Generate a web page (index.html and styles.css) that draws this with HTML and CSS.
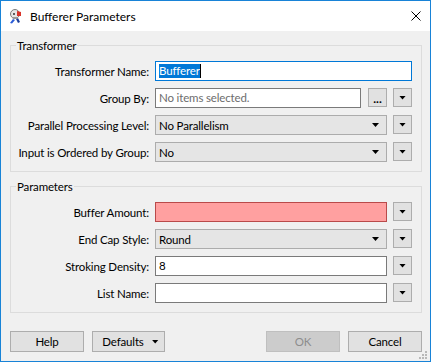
FILE: index.html
```html
<!DOCTYPE html>
<html lang="en">
<head>
    <meta charset="UTF-8">
    <title>Bufferer Parameters</title>
    <link rel="stylesheet" href="styles.css">
</head>
<body>
    <div class="window">
        <div class="titlebar">
            <svg class="app-icon" viewBox="0 0 16 16">
                <path d="M5 11 L2 15 L4 15.5 L7 12 Z" fill="#2a5bd7"/>
                <path d="M8 11 L10 15 L12 14 L10 10 Z" fill="#1c3f9c"/>
                <circle cx="7" cy="6" r="4.5" fill="#e6e6e6" stroke="#7a7a7a" stroke-width="1"/>
                <path d="M9 3 L13 4 L13 8 L9 8 Z" fill="#d9342b"/>
                <circle cx="6" cy="6" r="1" fill="#333"/>
                <path d="M4 9 L10 9 L9 11 L5 11 Z" fill="#9a9a9a"/>
            </svg>
            <span class="title">Bufferer Parameters</span>
            <svg class="close" viewBox="0 0 10 10">
                <path d="M0.5 0.5 L9.5 9.5 M9.5 0.5 L0.5 9.5" stroke="#000" stroke-width="1"/>
            </svg>
        </div>

        <div class="content">
            <fieldset class="group">
                <legend>Transformer</legend>
                <div class="form">
                    <label>Transformer Name:</label>
                    <div class="input focused span-all"><span class="selected">Bufferer</span><span class="caret"></span></div>

                    <label>Group By:</label>
                    <div class="field-pair">
                        <div class="input placeholder">No items selected.</div>
                        <button class="small-btn dots">...</button>
                    </div>
                    <button class="small-btn"><span class="tri"></span></button>

                    <label>Parallel Processing Level:</label>
                    <div class="combo"><span>No Parallelism</span><span class="tri"></span></div>
                    <button class="small-btn"><span class="tri"></span></button>

                    <label>Input is Ordered by Group:</label>
                    <div class="combo"><span>No</span><span class="tri"></span></div>
                    <button class="small-btn"><span class="tri"></span></button>
                </div>
            </fieldset>

            <fieldset class="group">
                <legend>Parameters</legend>
                <div class="form">
                    <label>Buffer Amount:</label>
                    <div class="input invalid"></div>
                    <button class="small-btn"><span class="tri"></span></button>

                    <label>End Cap Style:</label>
                    <div class="combo"><span>Round</span><span class="tri"></span></div>
                    <button class="small-btn"><span class="tri"></span></button>

                    <label>Stroking Density:</label>
                    <div class="input">8</div>
                    <button class="small-btn"><span class="tri"></span></button>

                    <label>List Name:</label>
                    <div class="input"></div>
                    <button class="small-btn"><span class="tri"></span></button>
                </div>
            </fieldset>

            <div class="footer">
                <button class="btn">Help</button>
                <button class="btn btn-menu">Defaults <span class="tri"></span></button>
                <div class="spacer"></div>
                <button class="btn" disabled>OK</button>
                <button class="btn">Cancel</button>
            </div>
        </div>

        <svg class="grip" viewBox="0 0 9 9">
            <rect x="6" y="0" width="2" height="2" fill="#b8b8b8"/>
            <rect x="3" y="3" width="2" height="2" fill="#b8b8b8"/>
            <rect x="6" y="3" width="2" height="2" fill="#b8b8b8"/>
            <rect x="0" y="6" width="2" height="2" fill="#b8b8b8"/>
            <rect x="3" y="6" width="2" height="2" fill="#b8b8b8"/>
            <rect x="6" y="6" width="2" height="2" fill="#b8b8b8"/>
        </svg>
    </div>
</body>
</html>
```

FILE: styles.css
```css
* {
    margin: 0;
    padding: 0;
    box-sizing: border-box;
}

body {
    width: 431px;
    height: 362px;
    overflow: hidden;
    background: #f0f0f0;
    font-family: Lato, 'Open Sans', sans-serif;
    font-size: 11.5px;
    letter-spacing: -0.15px;
    color: #000;
}

.window {
    position: relative;
    width: 431px;
    height: 362px;
    border: 1px solid #1883d7;
    background: #f0f0f0;
    display: flex;
    flex-direction: column;
}

.titlebar {
    height: 30px;
    background: #fff;
    display: flex;
    align-items: center;
    padding: 0 9px 0 7px;
}

.app-icon {
    width: 16px;
    height: 16px;
    margin-right: 6px;
}

.title {
    flex: 1;
    font-size: 12px;
    letter-spacing: 0;
}

.close {
    width: 10px;
    height: 10px;
}

.content {
    padding: 0 8px 0 9px;
}

.group {
    border: 1px solid #dcdcdc;
    margin-top: 7px;
    padding: 8px 8px 9px 0;
    min-width: 0;
}

.group legend {
    margin-left: 5px;
    padding: 0 1px;
    line-height: 15px;
}

.form {
    display: grid;
    grid-template-columns: 138px 232px 19px;
    grid-auto-rows: 20px;
    column-gap: 6px;
    row-gap: 7px;
}

.form label {
    text-align: right;
    align-self: center;
    white-space: nowrap;
}

.span-all {
    grid-column: 2 / 4;
}

.input {
    height: 20px;
    border: 1px solid #7a7a7a;
    background: #fff;
    padding: 0 3px;
    line-height: 18px;
    white-space: nowrap;
    overflow: hidden;
}

.input.focused {
    border-color: #0078d7;
    display: flex;
    align-items: center;
}

.selected {
    background: #0078d7;
    color: #fff;
    line-height: 14px;
}

.caret {
    width: 1px;
    height: 14px;
    background: #000;
}

.input.placeholder {
    color: #6d6d6d;
}

.input.invalid {
    background: #ffa0a0;
    border-color: #b94a4a;
}

.field-pair {
    display: flex;
    gap: 7px;
}

.field-pair .input {
    flex: 1;
}

.combo {
    height: 20px;
    border: 1px solid #acacac;
    background: #e5e5e5;
    padding: 0 7px 0 3px;
    display: flex;
    align-items: center;
    justify-content: space-between;
}

.tri {
    display: inline-block;
    width: 7px;
    height: 4px;
    background: #000;
    clip-path: polygon(0 0, 100% 0, 50% 100%);
}

.small-btn {
    width: 19px;
    height: 19px;
    border: 1px solid #adadad;
    background: #e1e1e1;
    display: flex;
    align-items: center;
    justify-content: center;
    font-family: inherit;
    font-size: 12px;
}

.small-btn.dots {
    align-items: flex-end;
    line-height: 14px;
    font-weight: bold;
}

.footer {
    display: flex;
    gap: 8px;
    margin-top: 18px;
}

.spacer {
    flex: 1;
}

.btn {
    width: 74px;
    height: 21px;
    border: 1px solid #adadad;
    background: #e1e1e1;
    font-family: inherit;
    font-size: 11.5px;
    letter-spacing: -0.15px;
    color: #000;
}

.btn-menu {
    width: 73px;
    display: flex;
    align-items: center;
    justify-content: center;
    gap: 8px;
    padding-left: 4px;
}

.btn:disabled {
    background: #cccccc;
    border-color: #bfbfbf;
    color: #8d8d8d;
}

.grip {
    position: absolute;
    right: 2px;
    bottom: 1px;
    width: 9px;
    height: 9px;
}
```
